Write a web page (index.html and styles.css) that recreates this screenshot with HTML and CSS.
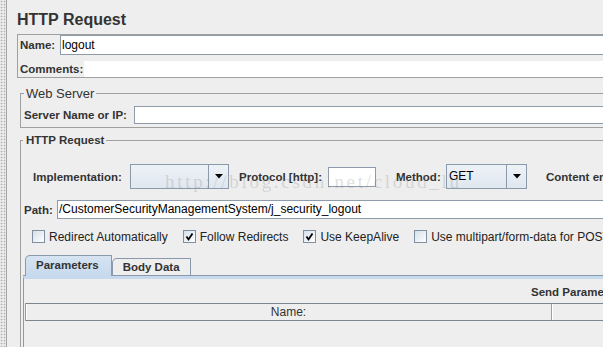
FILE: index.html
```html
<!DOCTYPE html>
<html>
<head>
<meta charset="utf-8">
<title>HTTP Request</title>
<link rel="stylesheet" href="styles.css">
</head>
<body>
<div class="app">
  <div class="stripe"></div>
  <div class="main">
    <h1 class="title">HTTP Request</h1>
    <div class="name-panel">
      <div class="name-row"><span class="lbl name-lbl">Name:</span><div class="field name-field">logout</div></div>
      <div class="comments-row"><span class="lbl comments-lbl">Comments:</span><div class="comments-field"></div></div>
    </div>
    <fieldset class="group web-server">
      <legend class="legend-plain">Web Server</legend>
      <div class="server-row"><span class="lbl server-lbl">Server Name or IP:</span><div class="field server-field"></div></div>
    </fieldset>
    <fieldset class="group http-request">
      <legend class="legend-bold">HTTP Request</legend>
      <div class="impl-row">
        <span class="lbl impl-lbl">Implementation:</span>
        <div class="combo impl-combo">
          <span class="combo-text"></span>
          <span class="combo-btn"><svg width="8" height="5" viewBox="0 0 8 5"><polygon points="0,0 8,0 4,4.5" fill="#000"/></svg></span>
        </div>
        <span class="lbl proto-lbl">Protocol [http]:</span>
        <div class="field proto-field"></div>
        <span class="lbl method-lbl">Method:</span>
        <div class="combo method-combo">
          <span class="combo-text">GET</span>
          <span class="combo-btn"><svg width="8" height="5" viewBox="0 0 8 5"><polygon points="0,0 8,0 4,4.5" fill="#000"/></svg></span>
        </div>
        <span class="lbl content-lbl">Content encoding:</span>
      </div>
      <div class="path-row"><span class="lbl path-lbl">Path:</span><div class="field path-field">/CustomerSecurityManagementSystem/j_security_logout</div></div>
      <div class="checks">
        <label class="check"><span class="box"></span><span>Redirect Automatically</span></label>
        <label class="check"><span class="box"><svg width="11" height="11" viewBox="0 0 11 11"><path d="M2.5 5.5 L4.5 8.5 L8.5 2.5" stroke="#000" stroke-width="1.8" fill="none"/></svg></span><span>Follow Redirects</span></label>
        <label class="check"><span class="box"><svg width="11" height="11" viewBox="0 0 11 11"><path d="M2.5 5.5 L4.5 8.5 L8.5 2.5" stroke="#000" stroke-width="1.8" fill="none"/></svg></span><span>Use KeepAlive</span></label>
        <label class="check"><span class="box"></span><span>Use multipart/form-data for POST</span></label>
      </div>
      <div class="tabs">
        <div class="tab-list">
          <div class="tab active">Parameters</div>
          <div class="tab">Body Data</div>
        </div>
        <div class="tab-body">
          <div class="send-lbl">Send Parameters With the Request:</div>
          <div class="table">
            <div class="thead">
              <div class="th">Name:</div>
              <div class="th">Value</div>
            </div>
          </div>
        </div>
      </div>
    </fieldset>
  </div>
</div>
<div class="watermark">http://blog.csdn.net/cloud_lu</div>
</body>
</html>
```
FILE: styles.css
```css
* { box-sizing: border-box; }
html, body { margin: 0; padding: 0; }
body {
  width: 603px;
  height: 347px;
  overflow: hidden;
  position: relative;
  background: #eeeeee;
  font-family: "Liberation Sans", Arial, sans-serif;
  font-size: 12px;
  color: #000;
}
.app { display: flex; height: 347px; }
.stripe {
  flex: none;
  width: 7px;
  border-right: 1px solid #a4a4a4;
  background-color: #ececec;
  background-image: radial-gradient(circle, #b0b0b0 0.7px, transparent 1.1px);
  background-size: 3px 3px;
}
.main { flex: none; width: 1200px; padding: 10px 0 0 10px; }
.title {
  margin: 0 0 4px;
  font-size: 16px;
  line-height: 20px;
  font-weight: bold;
  color: #333;
}
.lbl { flex: none; font-weight: bold; font-size: 11.5px; color: #333; white-space: nowrap; }
.field {
  background: #fff;
  border: 1px solid #8d9bab;
  font-size: 12px;
  white-space: nowrap;
  overflow: hidden;
}

/* name / comments */
.name-panel { border: 1px solid #a0a0a0; padding-left: 1px; }
.name-row { display: flex; align-items: center; height: 20px; }
.name-lbl { width: 41px; padding-left: 1px; }
.name-field { flex: 1; height: 20px; line-height: 18px; padding-left: 1px; }
.comments-row { display: flex; align-items: center; height: 16px; margin-top: 6px; }
.comments-lbl { width: 65px; padding-left: 1px; }
.comments-field { flex: 1; height: 16px; background: #fff; }

/* titled groups */
.group {
  min-width: 0;
  margin: 0 0 0 3px;
  border: 1px solid #a0a0a0;
  border-right: none;
}
.web-server { margin-top: 8px; padding: 5px 0 3px 3px; }
.legend-plain { padding: 0 2px; font-size: 13px; line-height: 15px; color: #333; }
.server-row { display: flex; align-items: center; height: 18px; }
.server-lbl { width: 110px; }
.server-field { flex: 1; height: 18px; }

.http-request { margin-top: 5px; padding: 17px 0 0 2px; border-bottom: none; }
.legend-bold { padding: 0 2px 0 3px; font-size: 11.5px; font-weight: bold; line-height: 14px; color: #333; }

.impl-row { display: flex; align-items: center; height: 25px; padding-left: 10px; }
.impl-lbl { width: 97px; }
.combo {
  flex: none;
  display: flex;
  height: 25px;
  border: 1px solid #8a9aab;
  background: linear-gradient(#edf2f7, #dfe7ef);
}
.combo-text { flex: 1; padding-left: 2px; line-height: 23px; font-size: 12px; }
.combo-btn {
  flex: none;
  width: 20px;
  border-left: 1px solid #8a9aab;
  display: flex;
  align-items: center;
  justify-content: center;
}
.impl-combo { width: 99px; }
.proto-lbl { width: 89px; margin-left: 10px; }
.proto-field { flex: none; width: 48px; height: 20px; }
.method-lbl { width: 50px; margin-left: 20px; }
.method-combo { width: 81px; }
.content-lbl { margin-left: 19px; }

.path-row { display: flex; align-items: center; height: 19px; margin-top: 11px; padding-left: 1px; }
.path-lbl { width: 33px; }
.path-field { flex: 1; height: 19px; line-height: 17px; padding-left: 1px; }

.checks { display: flex; align-items: center; height: 13px; margin-top: 11px; padding-left: 9px; }
.check { display: flex; align-items: center; gap: 4px; margin-right: 15px; font-size: 12px; color: #222; white-space: nowrap; }
.box {
  flex: none;
  width: 13px;
  height: 13px;
  border: 1px solid #7f8fa0;
  background: linear-gradient(135deg, #d5e0eb, #ffffff);
  display: flex;
  align-items: center;
  justify-content: center;
}

/* tabs */
.tabs { margin-top: 12px; }
.tab-list {
  display: flex;
  align-items: flex-end;
  height: 21px;
  padding-left: 2px;
  border-bottom: 1px solid #8a9aab;
}
.tab {
  height: 17px;
  padding: 0 10px;
  border: 1px solid #8a9aab;
  border-bottom: none;
  border-top-left-radius: 5px;
  font-weight: bold;
  font-size: 11.5px;
  line-height: 16px;
  color: #333;
}
.tab.active {
  height: 21px;
  margin-bottom: -1px;
  padding: 0 12px 0 10px;
  line-height: 19px;
  background: linear-gradient(#d6e4f2, #c6d9ed);
  position: relative;
}
.tab-body {
  height: 120px;
  border-left: 1px solid #8a9aab;
  border-top: 3px solid #c6d9ed;
  padding-left: 1px;
}
.send-lbl {
  margin-top: 6px;
  padding-left: 506px;
  font-weight: bold;
  font-size: 11.5px;
  line-height: 14px;
  color: #333;
}
.table { margin-top: 4px; width: 1054px; border-left: 1px solid #8a9aab; }
.thead {
  display: flex;
  height: 18px;
  border-top: 1px solid #7d8791;
  border-bottom: 1px solid #7d8791;
}
.th {
  width: 526px;
  text-align: center;
  font-size: 12px;
  line-height: 16px;
  color: #333;
  border-right: 1px solid #9aa0a6;
  box-shadow: inset 1px 0 0 #fff;
}

.watermark {
  position: absolute;
  left: 165px;
  top: 172px;
  font-family: "Liberation Serif", "Times New Roman", serif;
  font-size: 19px;
  line-height: 19px;
  letter-spacing: 2.7px;
  color: rgba(130, 130, 130, 0.26);
  white-space: nowrap;
  pointer-events: none;
}
```
